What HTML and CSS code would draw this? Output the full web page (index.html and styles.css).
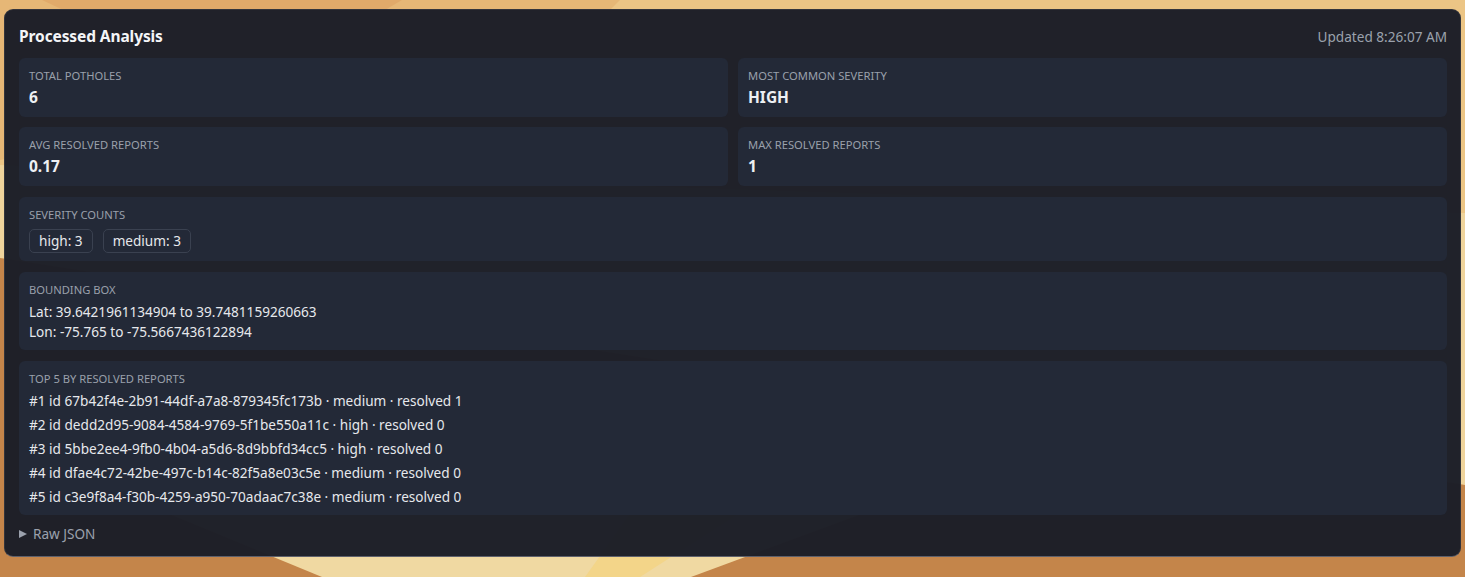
FILE: index.html
```html
<!DOCTYPE html>
<html lang="en">
<head>
<meta charset="utf-8">
<title>Processed Analysis</title>
<link rel="stylesheet" href="styles.css">
</head>
<body>
<svg class="backdrop" width="1465" height="577" viewBox="0 0 1465 577" aria-hidden="true">
  <rect x="0" y="0" width="1465" height="577" fill="#ecc585"/>
  <polygon points="0,0 620,0 560,60 0,160" fill="#e6b776"/>
  <polygon points="42,0 402,0 300,60 170,60" fill="#e1aa6a"/>
  <polygon points="0,165 1465,213 1465,485 0,258" fill="#efd49c"/>
  <polygon points="0,258 1465,485 1465,577 0,577" fill="#c4854a"/>
  <polygon points="38,460 1008,460 691,577 322,577" fill="#f0d9a2"/>
  <polygon points="640,500 760,500 640,577 585,577" fill="#f3d589"/>
</svg>
<main class="panel">
  <header class="panel-head">
    <h1 class="title">Processed Analysis</h1>
    <span class="updated">Updated 8:26:07 AM</span>
  </header>

  <section class="grid">
    <div class="card">
      <div class="label">Total Potholes</div>
      <div class="value">6</div>
    </div>
    <div class="card">
      <div class="label">Most Common Severity</div>
      <div class="value">HIGH</div>
    </div>
    <div class="card">
      <div class="label">Avg Resolved Reports</div>
      <div class="value">0.17</div>
    </div>
    <div class="card">
      <div class="label">Max Resolved Reports</div>
      <div class="value">1</div>
    </div>
  </section>

  <section class="card">
    <div class="label">Severity Counts</div>
    <div class="chips">
      <span class="chip">high: 3</span>
      <span class="chip">medium: 3</span>
    </div>
  </section>

  <section class="card">
    <div class="label">Bounding Box</div>
    <div class="lines">
      <div class="line">Lat: 39.6421961134904 to 39.7481159260663</div>
      <div class="line">Lon: -75.765 to -75.5667436122894</div>
    </div>
  </section>

  <section class="card">
    <div class="label">Top 5 by Resolved Reports</div>
    <div class="rows">
      <div class="line">#1 id 67b42f4e-2b91-44df-a7a8-879345fc173b · medium · resolved 1</div>
      <div class="line">#2 id dedd2d95-9084-4584-9769-5f1be550a11c · high · resolved 0</div>
      <div class="line">#3 id 5bbe2ee4-9fb0-4b04-a5d6-8d9bbfd34cc5 · high · resolved 0</div>
      <div class="line">#4 id dfae4c72-42be-497c-b14c-82f5a8e03c5e · medium · resolved 0</div>
      <div class="line">#5 id c3e9f8a4-f30b-4259-a950-70adaac7c38e · medium · resolved 0</div>
    </div>
  </section>

  <details class="raw">
    <summary>Raw JSON</summary>
  </details>
</main>
</body>
</html>
```

FILE: styles.css
```css
* {
  box-sizing: border-box;
}

html, body {
  margin: 0;
  padding: 0;
  width: 1465px;
  height: 577px;
  overflow: hidden;
}

body {
  font-family: "Segoe UI", "Noto Sans", "Open Sans", sans-serif;
  color: #e6e8ec;
  background: #c4854a;
  padding: 9px 4px 0 4px;
  position: relative;
}

.backdrop {
  position: absolute;
  left: 0;
  top: 0;
  z-index: 0;
}

.panel {
  position: relative;
  z-index: 1;
  width: 1457px;
  height: 548px;
  background: rgba(28, 30, 40, 0.985);
  border: 1px solid rgba(255, 255, 255, 0.09);
  border-bottom-color: rgba(170, 175, 190, 0.45);
  border-radius: 9px;
  padding: 14px 13px 12px 14px;
  display: flex;
  flex-direction: column;
  gap: 11px;
}

.panel-head {
  display: flex;
  justify-content: space-between;
  align-items: center;
  height: 24px;
  margin-top: 0;
  margin-bottom: -1px;
}

.title {
  margin: 0;
  font-size: 15.5px;
  font-weight: 700;
  color: #f4f5f7;
  letter-spacing: -0.1px;
}

.updated {
  font-size: 13.6px;
  color: #9ba1ad;
}

.grid {
  display: grid;
  grid-template-columns: 1fr 1fr;
  column-gap: 10px;
  row-gap: 10px;
}

.card {
  background: #232937;
  border-radius: 6px;
  padding: 10px 10px 8px 10px;
}

.label {
  font-size: 11.2px;
  line-height: 16px;
  text-transform: uppercase;
  color: #9aa0ab;
}

.value {
  font-size: 15.5px;
  font-weight: 700;
  line-height: 23px;
  color: #eef0f3;
  margin-top: 2px;
}

.chips {
  display: flex;
  gap: 10px;
  margin-top: 6px;
}

.chip {
  font-size: 13.6px;
  line-height: 22px;
  padding: 0 9px;
  border: 1px solid #3a4150;
  border-radius: 5px;
  color: #e6e8ec;
}

.lines {
  margin-top: 4px;
}

.line {
  font-size: 13.6px;
  line-height: 20px;
  color: #e6e8ec;
}

.rows {
  margin-top: 4px;
  display: flex;
  flex-direction: column;
  gap: 4px;
}

.raw {
  margin-top: -2px;
}

.raw summary {
  font-size: 13.6px;
  line-height: 20px;
  color: #9ba1ad;
  cursor: pointer;
  list-style: none;
  display: flex;
  align-items: center;
  gap: 6px;
}

.raw summary::-webkit-details-marker {
  display: none;
}

.raw summary::before {
  content: "";
  width: 0;
  height: 0;
  border-top: 4.5px solid transparent;
  border-bottom: 4.5px solid transparent;
  border-left: 8px solid #9ba1ad;
}
```
